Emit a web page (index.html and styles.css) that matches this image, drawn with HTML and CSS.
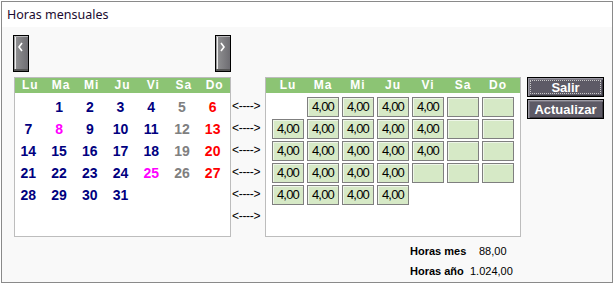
FILE: index.html
```html
<!DOCTYPE html>
<html>
<head>
<meta charset="utf-8">
<link rel="stylesheet" href="styles.css">
</head>
<body>
<div class="window">
  <div class="titlebar">Horas mensuales</div>
  <div class="content">
    <div class="navrow">
      <button class="navbtn"><svg width="8" height="10" viewBox="0 0 8 10"><path d="M5 1 L2 5 L5 9" fill="none" stroke="#fff" stroke-width="1.6"/></svg></button>
      <button class="navbtn next"><svg width="8" height="10" viewBox="0 0 8 10"><path d="M2 1 L5 5 L2 9" fill="none" stroke="#fff" stroke-width="1.6"/></svg></button>
    </div>
    <div class="mainrow">
      <div class="calendar">
        <div class="head">
          <span>Lu</span><span>Ma</span><span>Mi</span><span>Ju</span><span>Vi</span><span>Sa</span><span>Do</span>
        </div>
        <div class="days">
          <span></span><span>1</span><span>2</span><span>3</span><span>4</span><span class="sat">5</span><span class="sun">6</span>
          <span>7</span><span class="hol">8</span><span>9</span><span>10</span><span>11</span><span class="sat">12</span><span class="sun">13</span>
          <span>14</span><span>15</span><span>16</span><span>17</span><span>18</span><span class="sat">19</span><span class="sun">20</span>
          <span>21</span><span>22</span><span>23</span><span>24</span><span class="hol">25</span><span class="sat">26</span><span class="sun">27</span>
          <span>28</span><span>29</span><span>30</span><span>31</span><span></span><span></span><span></span>
        </div>
      </div>
      <div class="arrows">
        <span>&lt;----&gt;</span><span>&lt;----&gt;</span><span>&lt;----&gt;</span><span>&lt;----&gt;</span><span>&lt;----&gt;</span><span>&lt;----&gt;</span>
      </div>
      <div class="hours">
        <div class="head">
          <span>Lu</span><span>Ma</span><span>Mi</span><span>Ju</span><span>Vi</span><span>Sa</span><span>Do</span>
        </div>
        <div class="cells">
          <span class="none"></span><span class="c">4,00</span><span class="c">4,00</span><span class="c">4,00</span><span class="c">4,00</span><span class="c"></span><span class="c"></span>
          <span class="c">4,00</span><span class="c">4,00</span><span class="c">4,00</span><span class="c">4,00</span><span class="c">4,00</span><span class="c"></span><span class="c"></span>
          <span class="c">4,00</span><span class="c">4,00</span><span class="c">4,00</span><span class="c">4,00</span><span class="c">4,00</span><span class="c"></span><span class="c"></span>
          <span class="c">4,00</span><span class="c">4,00</span><span class="c">4,00</span><span class="c">4,00</span><span class="c"></span><span class="c"></span><span class="c"></span>
          <span class="c">4,00</span><span class="c">4,00</span><span class="c">4,00</span><span class="c">4,00</span>
        </div>
      </div>
      <div class="actions">
        <button class="btn focus"><span>Salir</span></button>
        <button class="btn"><span>Actualizar</span></button>
      </div>
    </div>
    <div class="totals">
      <div class="trow"><span class="lbl">Horas mes</span><span class="val v1">88,00</span></div>
      <div class="trow"><span class="lbl">Horas año</span><span class="val v2">1.024,00</span></div>
    </div>
  </div>
</div>
</body>
</html>
```

FILE: styles.css
```css
html, body {
  margin: 0;
  padding: 0;
  background: #ffffff;
}
body {
  padding: 1px 0 0 1px;
  font-family: "Liberation Sans", Arial, sans-serif;
}
.window {
  width: 610px;
  height: 280px;
  border: 1px solid #8a8a8a;
  background: #f9f9f9;
  display: flex;
  flex-direction: column;
}
.titlebar {
  height: 25px;
  background: #ffffff;
  font-family: "Noto Sans", "Open Sans", sans-serif;
  font-size: 12.5px;
  line-height: 25px;
  color: #1c0b30;
  padding-left: 5px;
}
.content {
  flex: 1;
  display: flex;
  flex-direction: column;
}
.navrow {
  display: flex;
  padding: 8px 0 0 11px;
  gap: 186px;
}
.navbtn {
  width: 16px;
  height: 37px;
  padding: 0;
  margin: 0;
  border: 1px solid #000;
  background: linear-gradient(to right, #9a9a9c 0, #9a9a9c 1px, #ececec 1px, #ececec 2px, #8e8e90 2px, #6e6d72 100%);
  box-shadow: inset 0 1px 0 #b8b8ba, inset 0 -2px 0 #555;
  display: flex;
  justify-content: center;
  align-items: flex-start;
  padding-top: 6px;
}
.navbtn svg {
  display: block;
}
.mainrow {
  display: flex;
  margin-top: 5px;
  padding-left: 12px;
  align-items: flex-start;
}
.calendar, .hours {
  border: 1px solid #bdbdbd;
  background: #ffffff;
  height: 158px;
}
.calendar {
  width: 215px;
}
.hours {
  width: 254px;
}
.head {
  height: 15px;
  background: #8cc474;
  display: grid;
  grid-template-columns: repeat(7, 1fr);
  color: #ffffff;
  font-weight: bold;
  font-size: 12px;
  line-height: 15px;
  letter-spacing: 1px;
  text-align: center;
}
.hours .head {
  grid-template-columns: repeat(7, 32px);
  column-gap: 3px;
  padding-left: 6px;
}
.days {
  display: grid;
  grid-template-columns: repeat(7, 1fr);
  grid-auto-rows: 22px;
  padding-top: 3px;
  font-weight: bold;
  font-size: 14px;
  line-height: 22px;
  color: #000080;
  text-align: center;
}
.days span {
  padding-right: 4px;
}
.days .sat { color: #808080; }
.days .sun { color: #ff0000; }
.days .hol { color: #ff00ff; }
.arrows {
  width: 33px;
  padding: 18px 0 0 1px;
  display: flex;
  flex-direction: column;
  font-size: 12px;
  line-height: 22px;
  color: #000;
  letter-spacing: -0.3px;
}
.cells {
  display: grid;
  grid-template-columns: repeat(7, 32px);
  grid-auto-rows: 20px;
  column-gap: 3px;
  row-gap: 2px;
  padding: 4px 0 0 6px;
}
.cells .c {
  background: #d6e9c6;
  border: 1px solid #7f7f7f;
  box-shadow: inset 1px 1px 0 #eef6e8;
  font-size: 13px;
  line-height: 17px;
  text-align: center;
  letter-spacing: -0.8px;
  color: #000;
}
.actions {
  margin-left: 6px;
  display: flex;
  flex-direction: column;
  gap: 2px;
}
.btn {
  width: 77px;
  height: 20px;
  margin: 0;
  padding: 0;
  border: 1px solid #000;
  background: #5d5a66;
  box-shadow: inset 1px 1px 0 #9c9aa4, inset 2px 2px 0 #77747f, inset -1px -1px 0 #3c3a42;
  color: #fff;
  font-family: "Liberation Sans", Arial, sans-serif;
  font-weight: bold;
  font-size: 13px;
  display: flex;
  justify-content: center;
  align-items: center;
  position: relative;
}
.btn.focus::after {
  content: "";
  position: absolute;
  left: 2px;
  top: 2px;
  right: 2px;
  bottom: 2px;
  border: 1px dotted #c8c8c8;
}
.totals {
  margin-top: 4px;
  padding-left: 408px;
  display: flex;
  flex-direction: column;
  font-size: 11px;
  line-height: 20px;
  color: #000;
}
.trow {
  display: flex;
}
.lbl {
  font-weight: bold;
  width: 58px;
}
.v1 { margin-left: 11px; }
.v2 { margin-left: 2px; }
```
